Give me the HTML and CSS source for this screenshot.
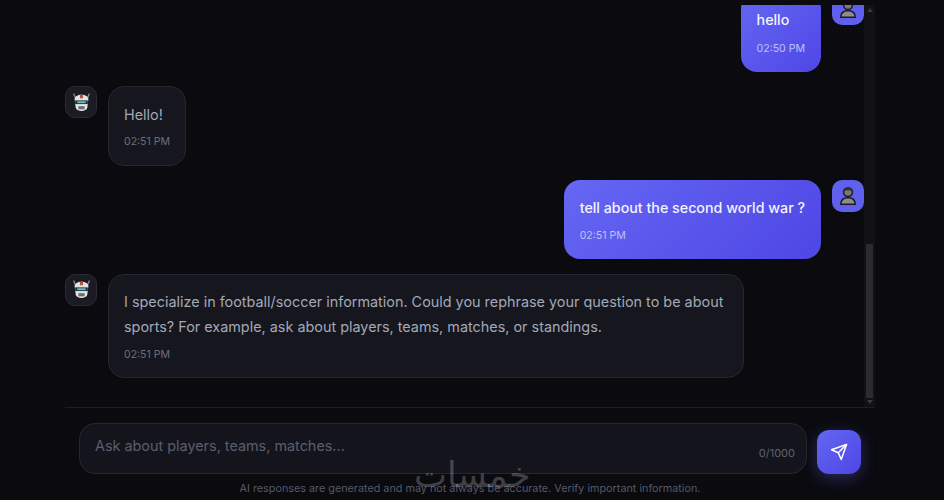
FILE: index.html
```html
<!DOCTYPE html>
<html lang="en">
<head>
<meta charset="UTF-8">
<meta name="viewport" content="width=device-width, initial-scale=1.0">
<title>Sports Chat</title>
<link rel="stylesheet" href="styles.css">
</head>
<body>
    <div class="app">
        <div class="chat">
            <div class="messages">

                <div class="row row-user">
                    <div class="bubble bubble-user">
                        <p class="text">hello</p>
                        <p class="time">02:50 PM</p>
                    </div>
                    <div class="avatar avatar-user">
                        <svg width="20" height="20" viewBox="0 0 18 18"><path d="M2.500 16.500c0-3.800 2.500-6 6.500-6s6.500 2.200 6.500 6z" fill="#8f8d8a" stroke="#1c1c24" stroke-width="1.400"/><circle cx="9" cy="5.500" r="4" fill="#7d7870" stroke="#1c1c24" stroke-width="1.400"/><path d="M5.500 4.500c.8-2.400 6-2.400 7 0-2.200-.8-4.800-.8-7 0z" fill="#2a2830"/></svg>
                    </div>
                </div>

                <div class="row">
                    <div class="avatar avatar-bot">
                        <svg width="19" height="21" viewBox="0 0 18 20"><path d="M1.500 1.500l2 5M16.500 1.500l-2 5" stroke="#8b8b90" stroke-width="1.200"/><path d="M2.500 7c0-3 2.800-4.500 6.500-4.500s6.500 1.500 6.500 4.500l-1 8c-.5 2-2.800 3-5.500 3s-5-1-5.500-3z" fill="#e4e4e4"/><path d="M7.500 2.600h3v3.400h-3z" fill="#b4553f"/><path d="M3 8h12v3.500h-12z" fill="#14303a"/><path d="M5 8.800h8v1.900h-8z" fill="#6fb6c4"/><path d="M6 13.500h6v3h-6z" fill="#6d6d72"/></svg>
                    </div>
                    <div class="bubble bubble-bot">
                        <p class="text">Hello!</p>
                        <p class="time">02:51 PM</p>
                    </div>
                </div>

                <div class="row row-user">
                    <div class="bubble bubble-user">
                        <p class="text">tell about the second world war ?</p>
                        <p class="time">02:51 PM</p>
                    </div>
                    <div class="avatar avatar-user">
                        <svg width="20" height="20" viewBox="0 0 18 18"><path d="M2.500 16.500c0-3.800 2.500-6 6.500-6s6.500 2.200 6.500 6z" fill="#8f8d8a" stroke="#1c1c24" stroke-width="1.400"/><circle cx="9" cy="5.500" r="4" fill="#7d7870" stroke="#1c1c24" stroke-width="1.400"/><path d="M5.500 4.500c.8-2.400 6-2.400 7 0-2.200-.8-4.800-.8-7 0z" fill="#2a2830"/></svg>
                    </div>
                </div>

                <div class="row">
                    <div class="avatar avatar-bot">
                        <svg width="19" height="21" viewBox="0 0 18 20"><path d="M1.500 1.500l2 5M16.500 1.500l-2 5" stroke="#8b8b90" stroke-width="1.200"/><path d="M2.500 7c0-3 2.800-4.500 6.500-4.500s6.500 1.500 6.500 4.500l-1 8c-.5 2-2.800 3-5.500 3s-5-1-5.500-3z" fill="#e4e4e4"/><path d="M7.500 2.600h3v3.400h-3z" fill="#b4553f"/><path d="M3 8h12v3.500h-12z" fill="#14303a"/><path d="M5 8.800h8v1.900h-8z" fill="#6fb6c4"/><path d="M6 13.500h6v3h-6z" fill="#6d6d72"/></svg>
                    </div>
                    <div class="bubble bubble-bot bubble-long">
                        <p class="text">I specialize in football/soccer information. Could you rephrase your question to be about sports? For example, ask about players, teams, matches, or standings.</p>
                        <p class="time">02:51 PM</p>
                    </div>
                </div>

            </div>

            <div class="scrollbar">
                <span class="arrow arrow-up"></span>
                <div class="scroll-space"></div>
                <div class="scroll-thumb"></div>
                <span class="arrow arrow-down"></span>
            </div>
        </div>

        <div class="composer">
            <div class="input-box">
                <span class="placeholder">Ask about players, teams, matches...</span>
                <span class="counter">0/1000</span>
            </div>
            <button class="send-btn" aria-label="Send">
                <svg width="18" height="18" viewBox="0 0 24 24" fill="none" stroke="#fff" stroke-width="2" stroke-linecap="round" stroke-linejoin="round"><line x1="22" y1="2" x2="11" y2="13"/><polygon points="22 2 15 22 11 13 2 9 22 2"/></svg>
            </button>
        </div>

        <p class="note">AI responses are generated and may not always be accurate. Verify important information.</p>
    </div>

    <div class="watermark" lang="ar" dir="rtl">خمسات</div>
</body>
</html>
```

FILE: styles.css
```css
html, body {
    height: 100%;
}

body {
    font-family: Inter, "Liberation Sans", sans-serif;
    margin: 0;
    padding: 0;
    background-color: #0a0a0f;
    overflow: hidden;
    position: relative;
}

p {
    margin: 0;
}

.app {
    width: 810px;
    margin-left: 65px;
    padding-top: 5px;
}

.chat {
    display: flex;
    height: 402px;
    border-bottom: 1px solid #1e1f25;
}

.messages {
    flex: 1;
    min-width: 0;
    overflow: hidden;
    display: flex;
    flex-direction: column;
    justify-content: flex-end;
    gap: 14.5px;
    padding-bottom: 29px;
}

.row {
    display: flex;
    gap: 11px;
    flex-shrink: 0;
}

.row-user {
    justify-content: flex-end;
}

.avatar {
    width: 32px;
    height: 32px;
    border-radius: 10px;
    display: flex;
    align-items: center;
    justify-content: center;
    flex-shrink: 0;
    box-sizing: border-box;
}

.avatar-bot {
    background-color: #1a1b23;
    border: 1px solid #2a2b33;
}

.avatar-user {
    background-color: #6060ee;
}

.bubble {
    box-sizing: border-box;
    border-radius: 16px;
}

.bubble-bot {
    background-color: #15161e;
    border: 1px solid #26272f;
    padding: 14.5px 15px 15.5px;
    color: #a3a8b6;
}

.bubble-long {
    width: 636px;
}

.bubble-user {
    background: linear-gradient(135deg, #6567f3, #4f46e5);
    color: #f3f3ff;
    font-weight: 500;
    padding: 14.5px 16px 16px;
}

.text {
    font-size: 14.4px;
    line-height: 25px;
}

.bubble-user .text {
    font-size: 14.25px;
}

.time {
    font-size: 10.56px;
    line-height: 14px;
    margin-top: 8.5px;
    color: #6c6f7d;
    font-weight: 400;
}

.bubble-user .time {
    color: #c0c2f8;
    margin-top: 9.5px;
}

.scrollbar {
    width: 11px;
    background-color: #111116;
    display: flex;
    flex-direction: column;
    align-items: center;
}

.arrow {
    width: 0;
    height: 0;
    border-left: 3px solid transparent;
    border-right: 3px solid transparent;
    flex-shrink: 0;
}

.arrow-up {
    margin-top: 3px;
    border-bottom: 4px solid #3a3a40;
}

.arrow-down {
    margin-top: 2px;
    margin-bottom: 3px;
    border-top: 4px solid #3a3a40;
}

.scroll-space {
    flex: 1;
}

.scroll-thumb {
    width: 7px;
    height: 154px;
    background-color: #2b2b30;
}

.composer {
    display: flex;
    align-items: flex-end;
    gap: 10px;
    padding: 15px 0 0 14px;
}

.input-box {
    box-sizing: border-box;
    width: 728px;
    height: 51px;
    background-color: #14151c;
    border: 1px solid #26272f;
    border-radius: 16px;
    padding: 0 11px 0 15px;
    position: relative;
    display: flex;
    justify-content: space-between;
}

.placeholder {
    font-size: 14.4px;
    line-height: 44px;
    color: #5b5e6c;
}

.counter {
    font-size: 11px;
    line-height: 14px;
    margin-top: 22px;
    color: #5f616c;
}

.send-btn {
    width: 44px;
    height: 44px;
    border: none;
    padding: 0;
    border-radius: 12px;
    background: linear-gradient(135deg, #6366f1, #4f46e5);
    box-shadow: 0 4px 16px rgba(99, 102, 241, 0.35);
    display: flex;
    align-items: center;
    justify-content: center;
    cursor: pointer;
}

.note {
    font-size: 10.8px;
    line-height: 14px;
    margin-top: 8px;
    width: 810px;
    text-align: center;
    color: #565966;
}

.watermark {
    position: absolute;
    left: 414px;
    top: 447px;
    font-family: "DejaVu Sans", sans-serif;
    font-size: 35px;
    line-height: 56px;
    color: rgba(255, 255, 255, 0.22);
    pointer-events: none;
}
```
